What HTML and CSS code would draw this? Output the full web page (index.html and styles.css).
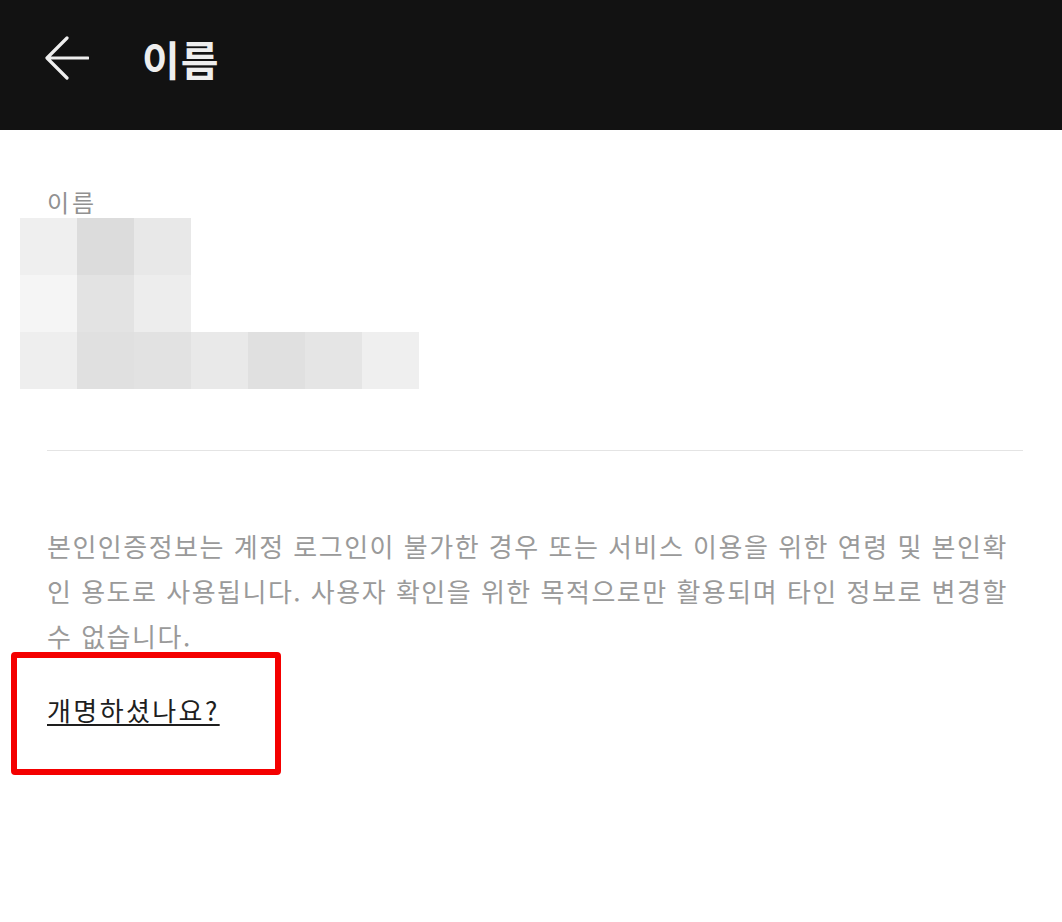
FILE: index.html
```html
<!DOCTYPE html>
<html lang="ko">
<head>
<meta charset="utf-8">
<link rel="stylesheet" href="styles.css">
</head>
<body>
<header class="topbar">
  <button class="back" aria-label="뒤로">
    <svg width="44" height="44" viewBox="0 0 44 44"><path d="M43 22H3M22 2L2 22l20 20" fill="none" stroke="#eeeeee" stroke-width="3.2" stroke-linecap="round" stroke-linejoin="round"/></svg>
  </button>
  <h1 class="title">이름</h1>
</header>
<main class="content">
  <section class="field">
    <div class="label">이름</div>
    <div class="mosaic">
      <i style="background:#efefef"></i><i style="background:#dcdcdc"></i><i style="background:#e8e8e8"></i><i class="e"></i><i class="e"></i><i class="e"></i><i class="e"></i>
      <i style="background:#f5f5f5"></i><i style="background:#e3e3e3"></i><i style="background:#ededed"></i><i class="e"></i><i class="e"></i><i class="e"></i><i class="e"></i>
      <i style="background:#eeeeee"></i><i style="background:#e0e0e0"></i><i style="background:#e2e2e2"></i><i style="background:#e9e9e9"></i><i style="background:#e0e0e0"></i><i style="background:#e5e5e5"></i><i style="background:#efefef"></i>
    </div>
  </section>
  <hr class="divider">
  <p class="notice">본인인증정보는 계정 로그인이 불가한 경우 또는 서비스 이용을 위한 연령 및 본인확인 용도로 사용됩니다. 사용자 확인을 위한 목적으로만 활용되며 타인 정보로 변경할 수 없습니다.</p>
  <div class="rename">
    <a class="rename-link" href="#">개명하셨나요?</a>
  </div>
</main>
</body>
</html>
```
FILE: styles.css
```css
html, body {
  margin: 0;
  padding: 0;
  background: #ffffff;
  font-family: "Noto Sans CJK KR", "Noto Sans", sans-serif;
}
.topbar {
  height: 130px;
  background: #121212;
  display: flex;
  align-items: flex-start;
  padding: 36px 0 0 45px;
  box-sizing: border-box;
}
.back {
  background: none;
  border: 0;
  padding: 0;
  width: 44px;
  height: 44px;
  display: block;
  cursor: pointer;
}
.back svg { display: block; }
.title {
  margin: 0 0 0 53px;
  color: #eeeeee;
  font-size: 41px;
  font-weight: 700;
  line-height: 44px;
  letter-spacing: 1px;
}
.content {
  padding: 0 39px 0 47px;
}
.field {
  padding-top: 56px;
}
.label {
  font-size: 24px;
  line-height: 32px;
  color: #919191;
  height: 32px;
  letter-spacing: 3px;
}
.mosaic {
  margin-left: -27px;
  display: grid;
  grid-template-columns: repeat(7, 57px);
  grid-auto-rows: 57px;
}
.mosaic i { display: block; }
.mosaic i.e { background: transparent; }
.divider {
  margin: 61px 0 0 0;
  border: 0;
  border-top: 1px solid #e4e4e4;
  height: 0;
}
.notice {
  margin: 72px 0 0 0;
  font-size: 26px;
  line-height: 45px;
  letter-spacing: 1.5px;
  color: #9a9a9a;
}
.rename {
  margin: -6px 0 0 -36px;
  width: 228px;
  height: 104px;
  border: 6px solid #f40000;
  border-radius: 4px;
  display: flex;
  align-items: center;
  padding: 0 0 7px 30px;
  box-sizing: content-box;
}
.rename-link {
  font-size: 26px;
  line-height: 34px;
  letter-spacing: 2.4px;
  color: #1e1e1e;
  text-decoration: underline;
  text-underline-offset: 3px;
  text-decoration-thickness: 2px;
}
```
